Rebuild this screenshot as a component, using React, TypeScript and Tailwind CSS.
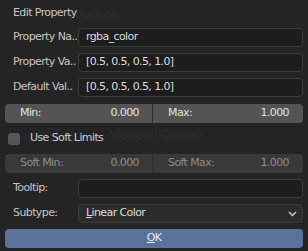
import React from "react";

const font = { fontFamily: '"DejaVu Sans", sans-serif' };

function TextRow({ label, value }: { label: string; value: string }) {
  return (
    <div className="flex items-center h-[19px]">
      <div className="w-[73px] pl-[8px] whitespace-nowrap overflow-hidden text-[#c6c6c6]">{label}</div>
      <div className="flex-1 h-[19px] rounded-[4px] border border-[#3b3b3b] bg-[#1d1d1d] pl-[7px] flex items-center text-[#dcdcdc]">
        {value}
      </div>
    </div>
  );
}

function NumPair({ a, av, b, bv, muted }: { a: string; av: string; b: string; bv: string; muted?: boolean }) {
  const bg = muted ? "bg-[#393939] text-[#8c8c8c]" : "bg-[#545454] text-[#e2e2e2]";
  return (
    <div className={`flex h-[19px] rounded-[4px] overflow-hidden ${bg}`}>
      <div className="w-[147px] flex items-center justify-between pl-[15px] pr-[13px]">
        <span>{a}</span>
        <span>{av}</span>
      </div>
      <div className="w-px bg-[#2f2f2f]" />
      <div className="flex-1 flex items-center justify-between pl-[15px] pr-[14px]">
        <span>{b}</span>
        <span>{bv}</span>
      </div>
    </div>
  );
}

export default function App() {
  return (
    <div style={font} className="w-[308px] h-[251px] bg-[#242424] overflow-hidden px-[5px] relative text-[11px] tracking-[-0.6px]">
      <div className="absolute left-[68px] top-[6px] text-[12px] text-[#2b2b2b] whitespace-nowrap pointer-events-none">Relations</div>
      <div className="absolute left-[110px] top-[126px] text-[12px] text-[#2b2b2b] whitespace-nowrap pointer-events-none">Viewport Display</div>
      <div className="relative">
        <div className="h-[28px] pl-[8px] pt-[5px] text-[#c6c6c6]">Edit Property</div>
        <div className="flex flex-col gap-[6px]">
          <TextRow label="Property Na.." value="rgba_color" />
          <TextRow label="Property Va.." value="[0.5, 0.5, 0.5, 1.0]" />
          <TextRow label="Default Val.." value="[0.5, 0.5, 0.5, 1.0]" />
        </div>
        <div className="mt-[7px]">
          <NumPair a="Min:" av="0.000" b="Max:" bv="1.000" />
        </div>
        <div className="h-[31px] flex items-center pl-[3px]">
          <div className="w-[12px] h-[12px] rounded-[3px] bg-[#565656]" />
          <span className="ml-[10px] text-[#cfcfcf]">Use Soft Limits</span>
        </div>
        <NumPair a="Soft Min:" av="0.000" b="Soft Max:" bv="1.000" muted />
        <div className="flex flex-col gap-[6px] mt-[6px]">
          <TextRow label="Tooltip:" value="" />
          <div className="flex items-center h-[19px]">
            <div className="w-[73px] pl-[8px] text-[#c6c6c6]">Subtype:</div>
            <div className="flex-1 h-[19px] rounded-[4px] border border-[#3b3b3b] bg-[#2c2c2c] pl-[7px] pr-[5px] flex items-center justify-between text-[#dcdcdc]">
              <span><span className="underline">L</span>inear Color</span>
              <svg width="9" height="6" viewBox="0 0 9 6">
                <path d="M1 1 L4.5 4.5 L8 1" fill="none" stroke="#c8c8c8" strokeWidth="1.5" />
              </svg>
            </div>
          </div>
        </div>
        <div className="mt-[6px] h-[19px] rounded-[4px] bg-[#5a719a] flex items-center justify-center text-[#ececec]">
          <span><span className="underline">O</span>K</span>
        </div>
      </div>
    </div>
  );
}
